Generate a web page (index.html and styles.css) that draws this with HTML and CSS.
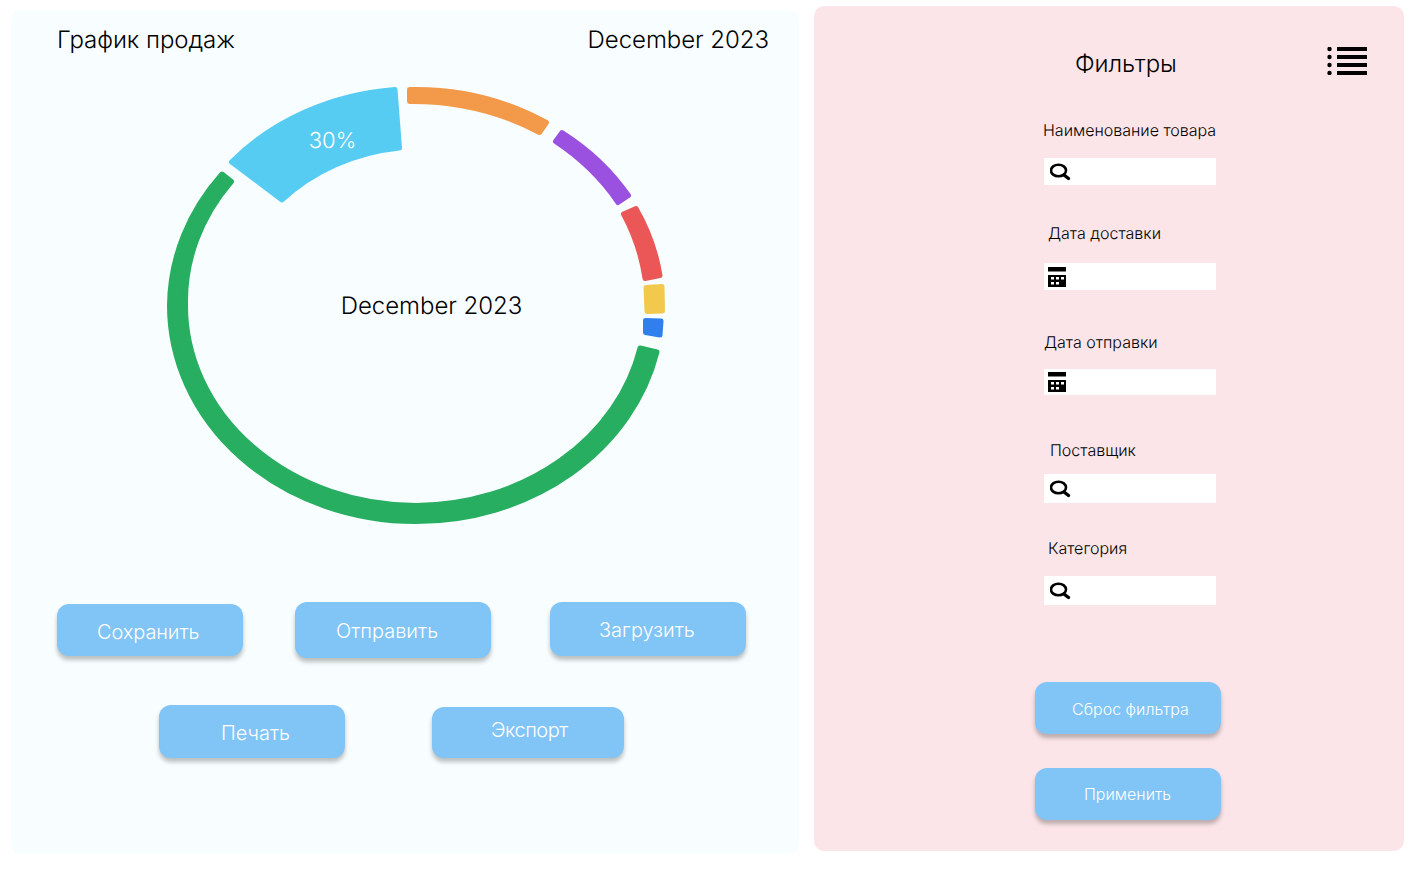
FILE: index.html
```html
<!DOCTYPE html>
<html lang="ru">
<head>
<meta charset="utf-8">
<title>График продаж</title>
<link rel="stylesheet" href="styles.css">
</head>
<body>
<main class="page">
  <section class="sales">
    <header class="sales-head">
      <h1 class="heading">График продаж</h1>
      <span class="heading">December 2023</span>
    </header>
    <svg class="chart" viewBox="160 80 510 450" width="510" height="450" aria-label="Диаграмма">
      <g class="seg seg-green"><path d="M657,352 A246.5 216 0 0 1 416,521.500 A246.500 216 0 0 1 169.500,305 A246.500 216 0 0 1 222,174 L231.500,181.500 A230.500 200 0 0 0 185.500,305 A230.500 200 0 0 0 416,505.500 A230.500 200 0 0 0 640,348 Z"/></g>
      <g class="seg seg-sky"><path d="M231.5,162 A246 216 0 0 1 395,89.5 L399.5,148 A190 165 0 0 0 282,200 Z"/></g>
      <g class="seg seg-orange"><path d="M409.5,89.5 A246.5 216 0 0 1 546.5,122.5 L539.5,132.5 A246.5 216 0 0 0 409.5,101.5 Z"/></g>
      <g class="seg seg-purple"><path d="M562,132.5 A246.5 216 0 0 1 628.5,195.5 L618,202.5 A246.5 216 0 0 0 555.5,141.5 Z"/></g>
      <g class="seg seg-red"><path d="M623.5,214 L636,208.5 A246.5 216 0 0 1 660,275.5 L645,278.5 A246.5 216 0 0 0 623.5,214 Z"/></g>
      <path class="seg seg-yellow" d="M646,287.5 L662,286.5 L662.5,311 L647,311.5 Z"/>
      <path class="seg seg-blue" d="M645.5,320.5 L661,321 L660,335 L645.5,332.5 Z"/>
      <text class="chart-center" x="431.5" y="314">December 2023</text>
      <text class="chart-pct" x="332.5" y="148">30%</text>
    </svg>
    <div class="btn-row btn-row-a">
      <button class="btn btn-save">Сохранить</button>
      <button class="btn btn-send">Отправить</button>
      <button class="btn btn-load">Загрузить</button>
    </div>
    <div class="btn-row btn-row-b">
      <button class="btn btn-print">Печать</button>
      <button class="btn btn-export">Экспорт</button>
    </div>
  </section>

  <aside class="filters">
    <header class="filters-head">
      <h2 class="heading filters-title">Фильтры</h2>
      <svg class="list-icon" viewBox="0 0 40 28" width="40" height="28" aria-hidden="true">
        <circle cx="2.5" cy="2" r="2.2"/><rect x="10" y="0" width="30" height="4"/>
        <circle cx="2.5" cy="10" r="2.2"/><rect x="10" y="8" width="30" height="4"/>
        <circle cx="2.5" cy="18" r="2.2"/><rect x="10" y="16" width="30" height="4"/>
        <circle cx="2.5" cy="26" r="2.2"/><rect x="10" y="24" width="30" height="4"/>
      </svg>
    </header>

    <div class="field field-1">
      <label class="field-label">Наименование товара</label>
      <div class="field-box">
        <svg class="icon-search" viewBox="0 0 22 18" width="22" height="18" aria-hidden="true"><ellipse cx="8.500" cy="7.500" rx="7.500" ry="5.800"/><path class="search-handle" d="M14 12 L18.500 15.500"/></svg>
      </div>
    </div>
    <div class="field field-2">
      <label class="field-label">Дата доставки</label>
      <div class="field-box">
        <svg class="icon-cal" viewBox="0 0 18 20" width="18" height="20" aria-hidden="true"><path fill-rule="evenodd" d="M0 0h18v4.500H0z M0 8h18v12H0z M3 10v2.500h3V10z M8 10v2.500h3V10z M13 10v2.500h3V10z M3 15v2.500h3V15z M8 15v2.500h3V15z"/></svg>
      </div>
    </div>
    <div class="field field-3">
      <label class="field-label">Дата отправки</label>
      <div class="field-box">
        <svg class="icon-cal" viewBox="0 0 18 20" width="18" height="20" aria-hidden="true"><path fill-rule="evenodd" d="M0 0h18v4.500H0z M0 8h18v12H0z M3 10v2.500h3V10z M8 10v2.500h3V10z M13 10v2.500h3V10z M3 15v2.500h3V15z M8 15v2.500h3V15z"/></svg>
      </div>
    </div>
    <div class="field field-4">
      <label class="field-label">Поставщик</label>
      <div class="field-box">
        <svg class="icon-search" viewBox="0 0 22 18" width="22" height="18" aria-hidden="true"><ellipse cx="8.500" cy="7.500" rx="7.500" ry="5.800"/><path class="search-handle" d="M14 12 L18.500 15.500"/></svg>
      </div>
    </div>
    <div class="field field-5">
      <label class="field-label">Категория</label>
      <div class="field-box">
        <svg class="icon-search" viewBox="0 0 22 18" width="22" height="18" aria-hidden="true"><ellipse cx="8.500" cy="7.500" rx="7.500" ry="5.800"/><path class="search-handle" d="M14 12 L18.500 15.500"/></svg>
      </div>
    </div>

    <div class="filter-actions">
      <button class="btn btn-small">Сброс фильтра</button>
      <button class="btn btn-small btn-apply">Применить</button>
    </div>
  </aside>
</main>
</body>
</html>
```

FILE: styles.css
```css
* { box-sizing: border-box; }

html, body {
  margin: 0;
  padding: 0;
  background: #fff;
}

body {
  font-family: Inter, "Liberation Sans", sans-serif;
  color: #000;
  overflow: hidden;
  text-rendering: geometricPrecision;
  font-weight: 350;
}

.page {
  display: flex;
  align-items: flex-start;
  width: 1413px;
  height: 871px;
}

.heading {
  margin: 0;
  font-size: 24px;
  line-height: 29px;
  font-weight: 350;
  letter-spacing: -0.002em;
}

.sales {
  width: 788px;
  height: 844px;
  margin: 10px 0 0 11px;
  background: #f8feff;
  border-radius: 8px;
}

.sales-head {
  display: flex;
  justify-content: space-between;
  padding: 15px 30px 0 46px;
}

.chart {
  display: block;
  margin: 26px 0 0 149px;
}

.seg {
  stroke-width: 5;
  stroke-linejoin: round;
}
.seg-green { fill: #27ae60; stroke: #27ae60; }
.seg-sky { fill: #56ccf2; stroke: #56ccf2; }
.seg-orange { fill: #f2994a; stroke: #f2994a; }
.seg-purple { fill: #9b51e0; stroke: #9b51e0; }
.seg-red { fill: #eb5757; stroke: #eb5757; }
.seg-yellow { fill: #f2c94c; stroke: #f2c94c; }
.seg-blue { fill: #2f80ed; stroke: #2f80ed; }

.chart-center {
  font-size: 24px;
  letter-spacing: -0.002em;
  text-anchor: middle;
  fill: #000;
}
.chart-pct {
  font-size: 22px;
  text-anchor: middle;
  fill: #fff;
}

.btn-row {
  display: flex;
  align-items: flex-start;
}
.btn-row-a {
  margin-top: 72px;
  padding-left: 46px;
}
.btn-row-b {
  margin-top: 47px;
  padding-left: 148px;
}

.btn {
  display: block;
  margin: 0;
  border: 0;
  padding: 0;
  border-radius: 12px;
  background: #81c4f6;
  color: #fff;
  font-family: inherit;
  font-size: 20px;
  font-weight: 350;
  line-height: 24px;
  text-align: left;
  box-shadow: 0 4px 4px rgba(0, 0, 0, 0.25);
}

.btn-save { width: 186px; height: 52px; margin-top: 2px; padding: 4px 0 0 40px; letter-spacing: -0.005em; }
.btn-send { width: 196px; height: 56px; margin-left: 52px; padding: 1px 0 0 41px; }
.btn-load { width: 196px; height: 54px; margin-left: 59px; padding: 1px 0 0 49px; }
.btn-print { width: 186px; height: 53px; padding: 3px 0 0 62px; }
.btn-export { width: 192px; height: 51px; margin: 2px 0 0 87px; padding: 0 0 6px 59px; letter-spacing: -0.025em; }

.filters {
  width: 590px;
  height: 845px;
  margin: 6px 0 0 15px;
  background: #fbe5e8;
  border-radius: 10px;
}

.filters-head {
  display: flex;
  align-items: flex-start;
  justify-content: space-between;
  padding: 41px 37px 0 261px;
}
.filters-title { padding-top: 2px; margin-bottom: 1px; }
.list-icon { display: block; fill: #000; }

.field {
  margin-left: 230px;
  width: 172px;
}
.field-label {
  display: block;
  font-size: 16px;
  line-height: 20px;
  white-space: nowrap;
}
.field-box {
  display: flex;
  align-items: center;
  background: #fff;
}

.field-1 { margin-top: 41px; }
.field-1 .field-label { margin: 0 0 18px -1px; }
.field-1 .field-box { height: 27px; padding-left: 6px; }

.field-2 { margin-top: 38px; }
.field-2 .field-label { margin: 0 0 20px 4px; }
.field-2 .field-box { height: 27px; padding: 1px 0 0 4px; }

.field-3 { margin-top: 42px; }
.field-3 .field-label { margin: 0 0 17px 0; }
.field-3 .field-box { height: 26px; padding: 0 0 0 4px; }

.field-4 { margin-top: 45px; }
.field-4 .field-label { margin: 0 0 14px 6px; }
.field-4 .field-box { height: 29px; padding-left: 6px; }

.field-5 { margin-top: 35px; }
.field-5 .field-label { margin: 0 0 18px 4px; }
.field-5 .field-box { height: 29px; padding-left: 6px; }

.icon-search { display: block; fill: none; stroke: #000; stroke-width: 2.6; stroke-linecap: round; }
.search-handle { stroke-width: 3.4; }
.icon-cal { display: block; fill: #000; }

.filter-actions {
  margin: 77px 0 0 221px;
}
.btn-small {
  width: 186px;
  height: 52px;
  padding: 2px 0 0 37px;
  font-size: 16px;
}
.btn-apply {
  margin-top: 34px;
  padding: 0 0 0 49px;
}
```
